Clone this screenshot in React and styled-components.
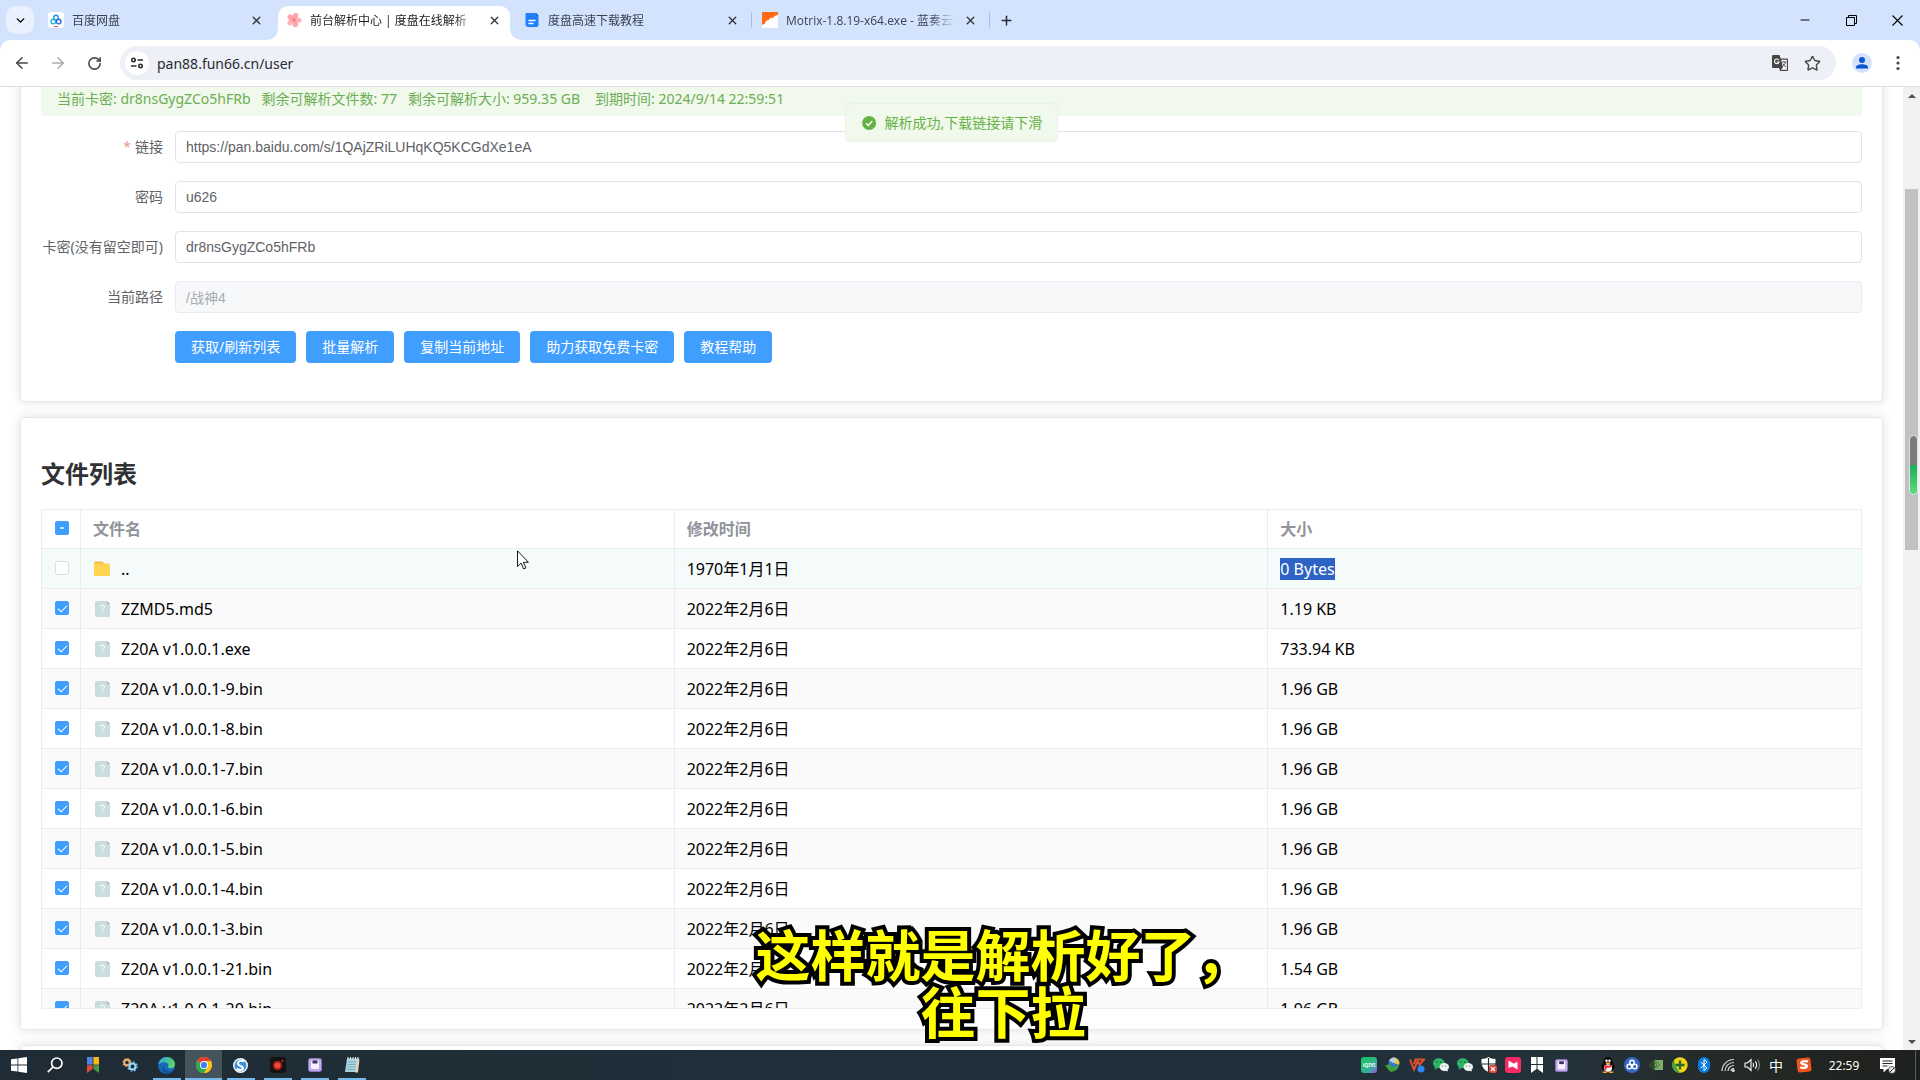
import React from 'react';
import styled, { createGlobalStyle, css } from 'styled-components';
import {
  ArrowLeft,
  ArrowRight,
  ChevronDown,
  Minus,
  Plus,
  RotateCw,
  Star,
  X,
} from 'lucide-react';

const GlobalStyle = createGlobalStyle`
  * {
    box-sizing: border-box;
  }
  body {
    margin: 0;
    overflow: hidden;
    font-family: 'Noto Sans', 'Noto Sans CJK SC', sans-serif;
    color: #000;
  }
  button {
    padding: 0;
    border: 0;
    background: none;
    color: inherit;
    font: inherit;
    cursor: pointer;
  }
`;

const Screen = styled.div`
  position: relative;
  display: flex;
  flex-direction: column;
  height: 100vh;
  background: #d3e3fd;
`;

// browser chrome
const TabStrip = styled.div`
  display: flex;
  align-items: stretch;
  height: 40px;
  padding: 6px 0 0 6px;
  background: #d3e3fd;
`;

const TabSearch = styled.button`
  display: flex;
  align-items: center;
  justify-content: center;
  width: 28px;
  height: 28px;
  margin-right: 6px;
  border-radius: 10px;
  background: #e9f1fe;
`;

const activeTab = css`
  width: 232px;
  margin-right: 6px;
  padding-right: 8px;
  border-radius: 10px 10px 0 0;
  background: #fff;
  color: #1f1f1f;
  &::before,
  &::after {
    content: '';
    position: absolute;
    bottom: 0;
    width: 10px;
    height: 10px;
  }
  &::before {
    left: -10px;
    background: radial-gradient(circle at 0 0, #d3e3fd 9px, #fff 10px);
  }
  &::after {
    right: -10px;
    background: radial-gradient(circle at 100% 0, #d3e3fd 9px, #fff 10px);
  }
`;

const separatedTab = css`
  &::after {
    content: '';
    position: absolute;
    right: 2px;
    top: 6px;
    width: 1px;
    height: 16px;
    background: #9dbff8;
  }
`;

const Tab = styled.div`
  position: relative;
  display: flex;
  align-items: center;
  gap: 8px;
  width: 238px;
  padding: 0 14px 6px 8px;
  font-family: 'Open Sans', 'Noto Sans CJK SC', sans-serif;
  font-size: 12px;
  color: #3c4350;
  ${(p) => p.$separated && separatedTab}
  ${(p) => p.$active && activeTab}
`;

const TabTitle = styled.span`
  flex: 1;
  min-width: 0;
  overflow: hidden;
  white-space: nowrap;
  mask-image: linear-gradient(to left, transparent, #000 24px);
`;

const TabButton = styled.button`
  display: flex;
  align-items: center;
  justify-content: center;
  width: ${(p) => p.$width}px;
  height: ${(p) => p.$width}px;
  color: #2b2f36;
`;

const WindowControls = styled.div`
  display: flex;
  margin: -6px 0 0 auto;
`;

const WindowButton = styled.button`
  display: flex;
  align-items: center;
  justify-content: center;
  width: 46px;
  height: 40px;
`;

const Toolbar = styled.div`
  display: flex;
  align-items: center;
  height: 47px;
  padding: 0 4px;
  border-bottom: 1px solid #dcdee2;
  border-radius: 10px 10px 0 0;
  background: #fff;
`;

const ToolButton = styled.button`
  display: flex;
  align-items: center;
  justify-content: center;
  width: ${(p) => (p.$small ? 32 : 36)}px;
  height: 32px;
  color: ${(p) => (p.$faded ? '#a9abae' : '#474747')};
`;

const Omnibox = styled.div`
  flex: 1;
  display: flex;
  align-items: center;
  height: 34px;
  margin: 0 8px;
  padding: 0 8px 0 5px;
  border-radius: 17px;
  background: #edf0f7;
`;

const SiteInfo = styled.button`
  display: flex;
  align-items: center;
  justify-content: center;
  width: 24px;
  height: 24px;
  border-radius: 50%;
  background: #fff;
`;

const Address = styled.input`
  flex: 1;
  margin: 0 8px;
  padding: 0;
  border: 0;
  outline: 0;
  background: none;
  font: 14px 'Noto Sans', 'Noto Sans CJK SC', sans-serif;
  color: #2a2c30;
`;

// page
const Viewport = styled.div`
  flex: 1;
  min-height: 0;
  display: flex;
  background: #fff;
`;

const PageArea = styled.div`
  position: relative;
  flex: 1;
  overflow: hidden;
`;

const Content = styled.main`
  display: flex;
  flex-direction: column;
  gap: 15px;
  margin-top: -28px;
  padding: 0 20px;
`;

const Card = styled.section`
  padding: 20px;
  border: 1px solid #e4e7ed;
  border-radius: 4px;
  background: #fff;
  box-shadow: 0 0 12px rgba(0, 0, 0, 0.12);
`;

const Alert = styled.div`
  display: flex;
  align-items: center;
  height: 36px;
  margin-bottom: 15px;
  padding: 0 16px;
  border-radius: 4px;
  background: #f0f9eb;
  font-size: 14px;
  color: #6dad55;
`;

const AlertItem = styled.span`
  margin-right: ${(p) => (p.$wide ? 15 : 11)}px;
`;

const FormRow = styled.div`
  display: flex;
  align-items: center;
  height: 32px;
  margin-bottom: 18px;
`;

const Label = styled.label`
  width: 134px;
  padding-right: 12px;
  font-size: 14px;
  line-height: 20px;
  text-align: right;
  white-space: nowrap;
  color: #606266;
`;

const Required = styled.span`
  margin-right: 4px;
  color: #e79a9a;
`;

const TextInput = styled.input`
  flex: 1;
  height: 32px;
  padding: 0 10px;
  border: 1px solid #e1e3e8;
  border-radius: 4px;
  outline: 0;
  background: #fff;
  font: 14px 'Liberation Sans', 'Noto Sans CJK SC', sans-serif;
  color: #606266;
  &:disabled {
    border-color: #e8ebef;
    background: #f6f8f9;
    color: #a8abb2;
  }
`;

const Actions = styled.div`
  display: flex;
  gap: 10px;
  margin-left: 134px;
`;

const PrimaryButton = styled.button`
  height: 32px;
  padding: 0 16px 2px;
  border-radius: 4px;
  background: #409eff;
  font-size: 14px;
  color: #fff;
`;

const CardTitle = styled.h1`
  margin: 20px 0 19px;
  font-size: 24px;
  line-height: 32px;
  font-weight: 700;
  color: #303133;
`;

const TableBox = styled.div`
  max-height: 500px;
  overflow: hidden;
  border-bottom: 1px solid #ebeef5;
`;

const FileTable = styled.table`
  width: 100%;
  table-layout: fixed;
  border-spacing: 0;
  font-size: 16px;
  line-height: 24px;
`;

const cell = css`
  height: 40px;
  padding: 0 12px;
  border-right: 1px solid #ebeef0;
  border-bottom: 1px solid #ebeef0;
  text-align: left;
  &:first-child {
    width: 40px;
    padding: 0 12px 2px 13px;
    border-left: 1px solid #ebeef0;
  }
`;

const HeadCell = styled.th`
  ${cell}
  border-top: 1px solid #ebeef0;
  font-weight: 700;
  color: #909399;
`;

const BodyCell = styled.td`
  ${cell}
`;

const FileRow = styled.tr`
  background: ${(p) => (p.$hovered ? '#f5fafb' : p.$striped ? '#fafafa' : '#fff')};
`;

const FileName = styled.div`
  display: flex;
  align-items: center;
  gap: 10px;
`;

const Selected = styled.span`
  background: #2c63c4;
  color: #fff;
`;

const Checkbox = styled.input`
  position: relative;
  display: block;
  appearance: none;
  width: 14px;
  height: 14px;
  margin: 0;
  border: 1px solid #dcdfe6;
  border-radius: 2px;
  background: #fff;
  &:checked {
    border-color: #409eff;
    background: #409eff;
  }
  &:checked::after {
    content: '';
    position: absolute;
    left: 4px;
    top: 1px;
    width: 4px;
    height: 8px;
    border: solid #fff;
    border-width: 0 1px 1px 0;
    transform: rotate(45deg);
  }
  &[data-partial='true']::after {
    left: 4px;
    top: 5px;
    height: 2px;
    border: 0;
    background: #c6e2ff;
    transform: none;
  }
`;

const Toast = styled.div`
  position: absolute;
  top: 16px;
  left: 50%;
  display: flex;
  align-items: center;
  gap: 8px;
  height: 39px;
  padding: 0 15px;
  border: 1px solid #e9f5e3;
  border-radius: 4px;
  background: #f0f9eb;
  font-size: 14px;
  line-height: 20px;
  white-space: nowrap;
  color: #67b245;
  transform: translateX(-50%);
`;

const Scrollbar = styled.div`
  display: flex;
  flex-direction: column;
  align-items: center;
  width: 17px;
  background: #f1f1f1;
`;

const ScrollArrow = styled.div`
  display: flex;
  align-items: center;
  justify-content: center;
  height: 17px;
`;

const ScrollSpace = styled.div`
  flex: ${(p) => p.$grow};
`;

const ScrollThumb = styled.div`
  flex: 361;
  width: 13px;
  background: #c1c1c1;
`;

// things floating over the page
const Meter = styled.div`
  position: absolute;
  top: 435px;
  right: 2px;
  width: 9px;
  height: 60px;
  border: 1px solid #e4e4e4;
  border-radius: 5px;
  background: linear-gradient(#7c7c7c 0 50%, #1fae5d 50%, #5bdc7c 100%);
`;

const Pointer = styled.svg`
  position: absolute;
  top: 550px;
  left: 517px;
`;

const Caption = styled.div`
  position: absolute;
  right: 0;
  bottom: 42px;
  left: 86px;
  font-family: 'Noto Sans CJK SC', sans-serif;
  font-size: 55px;
  font-weight: 700;
  line-height: 57px;
  text-align: center;
  color: #ff0;
  -webkit-text-stroke: 8px #000;
  paint-order: stroke fill;
  pointer-events: none;
`;

const Taskbar = styled.footer`
  display: flex;
  align-items: stretch;
  height: 30px;
  padding-right: 4px;
  background: linear-gradient(to right, #1f2c36, #20303a 70%, #233139 82%, #262a27 90%, #1d201d);
`;

const TaskItem = styled.button`
  display: flex;
  align-items: center;
  justify-content: center;
  width: 37px;
  background: ${(p) => (p.$active ? '#45535c' : 'none')};
  box-shadow: ${(p) => (p.$active ? 'inset 0 -2px #76b9ed' : 'none')};
  ${(p) =>
    p.$open &&
    css`
      background: linear-gradient(#76b9ed, #76b9ed) center bottom / 28px 2px no-repeat;
    `}
`;

const Tray = styled.div`
  display: flex;
  align-items: center;
  margin-left: auto;
  color: #fff;
`;

const TrayItem = styled.button`
  display: flex;
  align-items: center;
  justify-content: center;
  width: ${(p) => p.$width || 24}px;
  height: 30px;
  font-size: ${(p) => p.$size || 14}px;
  margin-right: ${(p) => p.$after || 0}px;
`;

const TrayEdge = styled.div`
  align-self: stretch;
  width: 1px;
  background: #5b605e;
`;

const CloudRings = ({ size = 16, bg = '#fff', mono }) => (
  <svg width={size} height={size} viewBox="0 0 16 16" fill="none">
    <rect width="16" height="16" rx={mono ? 8 : 3} fill={bg} />
    <g strokeWidth="1.4">
      <circle cx="8" cy="5.6" r="2.3" stroke={mono || '#2d8cf0'} />
      <circle cx="5.3" cy="9.6" r="2.3" stroke={mono || '#22b5d8'} />
      <circle cx="10.7" cy="9.6" r="2.3" stroke={mono || '#2d6fe0'} />
    </g>
    {!mono && <path d="M6 14.6h4" stroke="#e0424f" strokeWidth="1" />}
  </svg>
);

const Flower = () => (
  <svg width="16" height="16" viewBox="0 0 16 16">
    {[0, 72, 144, 216, 288].map((a) => (
      <ellipse
        key={a}
        cx="8"
        cy="4"
        rx="2.7"
        ry="3.5"
        fill={a % 144 ? '#ffb4ba' : '#ffa3ab'}
        transform={`rotate(${a + 20} 8 8)`}
      />
    ))}
    <circle cx="8" cy="8" r="1.7" fill="#f77a86" />
  </svg>
);

const DocIcon = () => (
  <svg width="16" height="16" viewBox="0 0 16 16">
    <path d="M2.5 1H12l2.5 2.5V13a2 2 0 0 1-2 2h-8a3 3 0 0 1-3-3V2a1 1 0 0 1 1-1z" fill="#1e80ff" />
    <path d="M12 1l2.5 2.5H12z" fill="#0d5fd0" />
    <path d="M4.5 8.5h7M4.5 11.5h5" stroke="#fff" strokeWidth="1.3" />
  </svg>
);

const LanzouIcon = () => (
  <svg width="16" height="16" viewBox="0 0 16 16">
    <rect width="16" height="16" fill="#fff" />
    <path d="M0 0h16v3c-3 .3-4 1.5-5 3-2-.6-3.6.2-4 2-2.5 0-3.5 1.3-4 3.500L0 13z" fill="#ff6a13" />
  </svg>
);

const TuneIcon = () => (
  <svg width="14" height="14" viewBox="0 0 14 14" fill="none" stroke="#2a2c30" strokeWidth="1.6">
    <circle cx="3.5" cy="4" r="1.7" />
    <path d="M7.5 4H13M1 10h5.5" />
    <circle cx="10.5" cy="10" r="1.7" />
  </svg>
);

const TranslateIcon = () => (
  <svg width="18" height="18" viewBox="0 0 18 18">
    <path d="M2 1h6.5l1.2 3.5H16a1 1 0 0 1 1 1V16a1 1 0 0 1-1 1H9.200L8 14H2a1 1 0 0 1-1-1V2a1 1 0 0 1 1-1z" fill="#474747" />
    <path d="M10.200 5.700h5.600v10.100H9.900l2-2.200z" fill="#fff" />
    <path d="M7.8 6.200A2.300 2.300 0 1 0 8 8H5.800" fill="none" stroke="#fff" strokeWidth="1.1" />
    <path d="M10.800 8h4.600M13 6.800V8M14.500 8c-.4 2-1.600 3.500-3.200 4.500M11.800 9.500c.7 1.500 1.700 2.500 3 3.200" fill="none" stroke="#474747" strokeWidth=".9" />
  </svg>
);

const AvatarIcon = () => (
  <svg width="20" height="20" viewBox="0 0 20 20">
    <circle cx="10" cy="10" r="10" fill="#d3e3fd" />
    <circle cx="10" cy="7" r="3" fill="#0b57d0" />
    <path d="M4 15.500v-1c0-2.200 3-3.200 6-3.200s6 1 6 3.200v1z" fill="#0b57d0" />
  </svg>
);

const MenuIcon = () => (
  <svg width="4" height="16" viewBox="0 0 4 16" fill="#474747">
    <circle cx="2" cy="2.5" r="1.6" />
    <circle cx="2" cy="8" r="1.6" />
    <circle cx="2" cy="13.5" r="1.6" />
  </svg>
);

const FolderIcon = () => (
  <svg width="18" height="18" viewBox="0 0 18 18">
    <path d="M1 3a1.500 1.500 0 0 1 1.500-1.500h7L12 4H1z" fill="#f3bb4c" />
    <path d="M1 3.500h14.500A1.500 1.500 0 0 1 17 5v9.500a1.500 1.500 0 0 1-1.500 1.500h-13A1.500 1.500 0 0 1 1 14.500z" fill="#ffd54f" />
  </svg>
);

const UnknownFileIcon = () => (
  <svg width="18" height="18" viewBox="0 0 18 18">
    <path d="M3.500 1H14l3 3v11.500a1.500 1.500 0 0 1-1.500 1.500h-12A1.500 1.500 0 0 1 2 15.500v-13A1.500 1.500 0 0 1 3.500 1z" fill="#cbdcde" />
    <path d="M14 1l3 3h-3z" fill="#a3b8bb" />
    <path d="M7.500 7.200a2 2 0 1 1 2.800 1.800c-.5.300-.8.600-.8 1.500M9.500 12v1.300" fill="none" stroke="#f2f8f8" strokeWidth="1.2" />
  </svg>
);

const SuccessIcon = () => (
  <svg width="16" height="16" viewBox="0 0 16 16">
    <circle cx="8" cy="8" r="7" fill="#67b245" />
    <path d="M5 8.200l2.200 2.200 4-4.300" fill="none" stroke="#fff" strokeWidth="1.4" />
  </svg>
);

const Triangle = ({ down }) => (
  <svg width="8" height="4" viewBox="0 0 8 4">
    <path d={down ? 'M0 0h8L4 4z' : 'M0 4h8L4 0z'} fill="#505050" />
  </svg>
);

const FloppyIcon = ({ size = 14 }) => (
  <svg width={size} height={size} viewBox="0 0 14 14">
    <rect x=".5" y=".5" width="13" height="13" rx="2" fill="#bfa9e6" stroke="#8f77c4" />
    <rect x="3" y="2.5" width="8" height="8.5" rx="1" fill="#f6f1ff" />
    <rect x="4.5" y="2.5" width="5" height="3" fill="#3b3354" />
  </svg>
);

const StartIcon = () => (
  <svg width="16" height="16" viewBox="0 0 16 16" fill="#fff">
    <path d="M0 2.300l6.500-.9v6.200H0zM7.300 1.300L16 0v7.600H7.300zM0 8.400h6.500v6.200L0 13.700zM7.300 8.400H16V16l-8.700-1.300z" />
  </svg>
);

const SearchIcon = () => (
  <svg width="18" height="16" viewBox="0 0 18 16" fill="none" stroke="#fff" strokeWidth="1.7">
    <circle cx="9.8" cy="6.2" r="5.2" />
    <path d="M6 10L.8 15.200" />
  </svg>
);

const RibbonIcon = () => (
  <svg width="12" height="16" viewBox="0 0 12 16">
    <path d="M0 0h5.600v7.600H0z" fill="#4a86e8" />
    <path d="M6.400 0H12v7.600H6.400z" fill="#f9b912" />
    <path d="M0 8.200h5.600V12L0 16z" fill="#e1473a" />
    <path d="M6.400 8.200H12V16l-5.600-4z" fill="#4b9b46" />
  </svg>
);

const GearsIcon = () => (
  <svg width="16" height="14" viewBox="0 0 16 14" fill="none">
    <circle cx="5" cy="4.5" r="2.8" stroke="#f0b070" strokeWidth="2" />
    <circle cx="5" cy="4.5" r="4" stroke="#e09a55" strokeWidth="1.2" strokeDasharray="1.6 1.5" />
    <circle cx="10.5" cy="8.5" r="3" stroke="#9ad4f5" strokeWidth="2.2" />
    <circle cx="10.5" cy="8.5" r="4.6" stroke="#7fbfe6" strokeWidth="1.4" strokeDasharray="1.8 1.8" />
  </svg>
);

const EdgeIcon = () => (
  <svg width="17" height="17" viewBox="0 0 17 17">
    <defs>
      <linearGradient id="edge-top" x1="0" x2="1" y1="0" y2=".4">
        <stop offset="0" stopColor="#2aa5e0" />
        <stop offset="1" stopColor="#5fd16b" />
      </linearGradient>
    </defs>
    <circle cx="8.5" cy="8.5" r="8.5" fill="#1468b8" />
    <path d="M.2 7.500C1 3 4.500 0 8.700 0 13.500 0 17 3.300 17 7.300c0 2.500-1.800 4-4.300 4-2.200 0-3.200-.9-2.500-1.900.9-1.600-.5-4.200-3.700-4.200C3.800 5.200 1.200 6.300.2 7.500z" fill="url(#edge-top)" />
    <path d="M6.200 8.500c-.8 4 3 6.500 8.600 5.600-2 2.800-5.500 3.200-8 1.900-3-1.500-3.400-5.500-.6-7.500z" fill="#1b4f9c" />
  </svg>
);

const ChromeIcon = () => (
  <svg width="16" height="16" viewBox="0 0 16 16">
    <circle cx="8" cy="8" r="8" fill="#fbc116" />
    <path d="M8 8L1.070 4A8 8 0 0 1 14.930 4z" fill="#e33b2e" />
    <path d="M8 8L1.070 4A8 8 0 0 0 8 16l4-6z" fill="#2da94f" />
    <path d="M8 4h6.930A8 8 0 0 1 8 16l3.500-6z" fill="#fbc116" />
    <circle cx="8" cy="8" r="4" fill="#fff" />
    <circle cx="8" cy="8" r="3.1" fill="#3b7ded" />
  </svg>
);

const SwirlIcon = () => (
  <svg width="15" height="15" viewBox="0 0 15 15">
    <circle cx="7.5" cy="7.5" r="7.5" fill="#f3f8fd" />
    <circle cx="7.5" cy="7.5" r="6" fill="#3b8fdc" />
    <path d="M11.500 3.500C8 1.500 4.500 3.500 5 6c.5 2 4.500 2 5 4 .2 1.600-2.500 2.800-6.500 1" fill="none" stroke="#fff" strokeWidth="2" />
  </svg>
);

const RecordIcon = () => (
  <svg width="16" height="16" viewBox="0 0 16 16">
    <rect width="16" height="16" rx="3" fill="#17120f" />
    <circle cx="7.5" cy="8.5" r="4.5" fill="#b82118" />
    <circle cx="7.5" cy="8.5" r="2.8" fill="#f04a3c" />
    <circle cx="12.5" cy="4" r="1" fill="#d9362b" />
  </svg>
);

const NotepadIcon = () => (
  <svg width="16" height="16" viewBox="0 0 16 16">
    <path d="M3 1.500h12L13.500 15H1z" fill="#a9d3df" />
    <path d="M13 2.500h2.500L14 15.500h-3z" fill="#dcd7b5" />
    <path d="M4 5h8M3.700 7.500h8M3.400 10h8M3 12.500h8" stroke="#6fa9bb" strokeWidth=".8" />
    <path d="M4 0v2.500M6.500 0v2.500M9 0v2.500M11.500 0v2.500M14 0v2.500" stroke="#eef6f8" />
  </svg>
);

const QiyiIcon = () => (
  <svg width="16" height="16" viewBox="0 0 16 16">
    <defs>
      <linearGradient id="qiyi" x1="0" x2="1" y1="0" y2="1">
        <stop offset=".3" stopColor="#1fc06a" />
        <stop offset=".7" stopColor="#3fa9a8" />
        <stop offset="1" stopColor="#b04be0" />
      </linearGradient>
    </defs>
    <rect width="16" height="16" rx="3" fill="url(#qiyi)" />
    <text x="8" y="10" fontSize="5" fontWeight="700" fill="#fff" textAnchor="middle">iQIYI</text>
  </svg>
);

const GlobeArrowIcon = () => (
  <svg width="16" height="16" viewBox="0 0 16 16">
    <circle cx="9" cy="6" r="5.5" fill="#3979c9" />
    <path d="M9 .5a5.500 5.500 0 0 1 5 7.500L9 6z" fill="#e8c93e" />
    <path d="M4 4c2 0 3 2 5 2s2-3 1-5.500A5.500 5.500 0 0 0 4 4z" fill="#b9cfe2" />
    <path d="M0 8.500L5 7l1 3c3 .5 6-.5 8-3 .5 5-5 8.500-9 7.500z" fill="#3ea33a" />
  </svg>
);

const VyIcon = () => (
  <svg width="16" height="16" viewBox="0 0 16 16">
    <path d="M1 2.500l4 10 3.500-8 2 3 4.500-5H6.500L5 7" fill="none" stroke="#e5502c" strokeWidth="2" />
    <circle cx="12" cy="12" r="3.5" fill="#2f86f0" />
  </svg>
);

const WeChatIcon = () => (
  <svg width="16" height="14" viewBox="0 0 16 14">
    <ellipse cx="5.8" cy="5.3" rx="5.8" ry="5" fill="#2fb566" />
    <path d="M2 8.500l-.5 3L5 10z" fill="#2fb566" />
    <ellipse cx="11.3" cy="9" rx="4.7" ry="4" fill="#f0f2f1" />
    <path d="M14 11l1 2.500-3-1z" fill="#f0f2f1" />
    <g fill="#1a5e36">
      <circle cx="4" cy="4" r=".8" />
      <circle cx="7.8" cy="4" r=".8" />
      <circle cx="9.8" cy="8" r=".6" />
      <circle cx="12.8" cy="8" r=".6" />
    </g>
  </svg>
);

const ShieldIcon = () => (
  <svg width="16" height="16" viewBox="0 0 16 16">
    <path d="M7.500 0C9 1.300 11.500 2 14.500 2c.3 6-1 10.500-7 13C1.500 12.500.2 8 .5 2c3 0 5.500-.7 7-2z" fill="#fff" />
    <path d="M7.500 1v14M.8 7h13.500" stroke="#1f2c33" strokeWidth="1.2" />
    <rect x="8" y="8" width="8" height="8" rx="2" fill="#dc4336" />
    <path d="M10 10l4 4M14 10l-4 4" stroke="#fff" strokeWidth="1.2" />
  </svg>
);

const PinkIcon = () => (
  <svg width="16" height="16" viewBox="0 0 16 16">
    <rect width="16" height="16" rx="3" fill="#f62b66" />
    <path d="M3.500 3.500l5 3L12.500 5v7.500l-5-3-4 1.500z" fill="#fff" />
  </svg>
);

const WhiteRibbonIcon = () => (
  <svg width="12" height="16" viewBox="0 0 12 16" fill="#fff">
    <path d="M0 0h5.500v7H0zM6.500 0H12v7H6.500zM0 8h5.500v4L0 16zM6.500 8H12v8l-5.500-4z" />
  </svg>
);

const PenguinIcon = () => (
  <svg width="16" height="16" viewBox="0 0 16 16">
    <ellipse cx="8" cy="9.5" rx="6.5" ry="5" fill="#050505" />
    <ellipse cx="8" cy="5" rx="4.5" ry="5" fill="#050505" />
    <ellipse cx="8" cy="11" rx="4" ry="3.8" fill="#fff" />
    <circle cx="6.5" cy="3.8" r="1.2" fill="#fff" />
    <circle cx="9.5" cy="3.8" r="1.2" fill="#fff" />
    <ellipse cx="8" cy="6.2" rx="2.5" ry=".9" fill="#f6a51c" />
    <path d="M3.500 7.500c3 1.500 6 1.500 9 0v2c-3 1.300-5 1.300-6 1.200v2.500H4.500V10z" fill="#e22e2a" />
    <path d="M2.500 14.500h4.500v1.500h-4zM9 14.500h4.500l-.5 1.500H9z" fill="#f6a51c" />
  </svg>
);

const NvidiaIcon = () => (
  <svg width="14" height="10" viewBox="0 0 14 10">
    <rect x="5.5" width="8.5" height="10" fill="#7fae6a" />
    <path d="M.5 5C2 2.700 4 1.800 6 1.800S9.500 3 10.500 4.500C9.500 6.500 8 7.500 6 7.500 4.700 7.500 3.500 6.500 3 5.200 4 3.800 5 3.500 6 3.500s2 .7 2 1.300-1 1.200-2 1.200M.5 5C1.500 7.500 3.500 9.200 6 9.200" fill="none" stroke="#3c6b2c" strokeWidth="1" />
  </svg>
);

const PlusBallIcon = () => (
  <svg width="16" height="16" viewBox="0 0 16 16">
    <circle cx="8" cy="8" r="7.7" fill="#f5d415" />
    <path d="M2.500 2.500A7.700 7.700 0 0 0 8 15.700C6 13 2 8 2.500 2.500z" fill="#3fa545" />
    <path d="M8 3.500v9M3.500 8h9" stroke="#28692c" strokeWidth="2.4" />
  </svg>
);

const BluetoothIcon = () => (
  <svg width="12" height="16" viewBox="0 0 12 16">
    <rect width="12" height="16" rx="6" fill="#0a7be0" />
    <path d="M3 5l6 6-3 2.700V2.300L9 5l-6 6" fill="none" stroke="#fff" strokeWidth="1" />
  </svg>
);

const WifiIcon = () => (
  <svg width="14" height="14" viewBox="0 0 14 14" fill="none" stroke="#d8dad9" strokeWidth="1.2">
    <path d="M1 13C1 6.500 6.500 1.500 13 1.500M4 13c0-5 4-8.500 9-8.500M7 13c0-3.200 2.700-5.500 6-5.500M10 13c0-1.400 1.300-2.500 3-2.500" />
    <circle cx="12.3" cy="12.5" r=".9" fill="#fff" />
  </svg>
);

const VolumeIcon = () => (
  <svg width="17" height="14" viewBox="0 0 17 14" fill="none" stroke="#fff" strokeWidth="1.1">
    <path d="M1 5h2.500L7 1.500v11L3.500 9H1zM9 5c.8 1.200.8 2.800 0 4M11.300 3.300c1.600 2.200 1.600 5.200 0 7.400" />
    <path d="M13.600 1.500c2.400 3.400 2.400 7.600 0 11" stroke="#878a88" />
  </svg>
);

const SogouIcon = () => (
  <svg width="16" height="16" viewBox="0 0 16 16">
    <rect x="1" y="1" width="14" height="14" rx="2.5" fill="#ee5620" transform="rotate(-6 8 8)" />
    <path d="M12 4.500c-3-.7-6.500-.3-6.800 1.200-.3 2 6 1.400 5.800 3.500-.2 1.800-4 2-7 1.300" fill="none" stroke="#fff" strokeWidth="2.2" />
  </svg>
);

const NoticeIcon = () => (
  <svg width="17" height="17" viewBox="0 0 17 17">
    <path d="M1 1h15v11H8l-3.500 3.500V12H1z" fill="#fff" />
    <path d="M3.500 4h10M3.500 6.500h10M3.500 9h5" stroke="#222624" strokeWidth="1" />
    <circle cx="13" cy="13" r="3.5" fill="#e8e9e8" stroke="#222624" strokeWidth=".7" />
    <path d="M11 15l4-4" stroke="#222624" strokeWidth="1" />
  </svg>
);

const tabs = [
  { title: '百度网盘', icon: <CloudRings /> },
  { title: '前台解析中心 | 度盘在线解析', icon: <Flower />, active: true },
  { title: '度盘高速下载教程', icon: <DocIcon />, separated: true },
  { title: 'Motrix-1.8.19-x64.exe - 蓝奏云', icon: <LanzouIcon />, separated: true },
];

const fields = [
  { id: 'link', label: '链接', value: 'https://pan.baidu.com/s/1QAjZRiLUHqKQ5KCGdXe1eA', required: true },
  { id: 'pwd', label: '密码', value: 'u626' },
  { id: 'card', label: '卡密(没有留空即可)', value: 'dr8nsGygZCo5hFRb' },
  { id: 'path', label: '当前路径', value: '/战神4', disabled: true },
];

const actions = ['获取/刷新列表', '批量解析', '复制当前地址', '助力获取免费卡密', '教程帮助'];

const files = [
  { name: '..', date: '1970年1月1日', size: '0 Bytes', folder: true },
  { name: 'ZZMD5.md5', size: '1.19 KB' },
  { name: 'Z20A v1.0.0.1.exe', size: '733.94 KB' },
  { name: 'Z20A v1.0.0.1-9.bin', size: '1.96 GB' },
  { name: 'Z20A v1.0.0.1-8.bin', size: '1.96 GB' },
  { name: 'Z20A v1.0.0.1-7.bin', size: '1.96 GB' },
  { name: 'Z20A v1.0.0.1-6.bin', size: '1.96 GB' },
  { name: 'Z20A v1.0.0.1-5.bin', size: '1.96 GB' },
  { name: 'Z20A v1.0.0.1-4.bin', size: '1.96 GB' },
  { name: 'Z20A v1.0.0.1-3.bin', size: '1.96 GB' },
  { name: 'Z20A v1.0.0.1-21.bin', size: '1.54 GB' },
  { name: 'Z20A v1.0.0.1-20.bin', size: '1.96 GB' },
];

const taskItems = [
  { name: 'Start', icon: <StartIcon /> },
  { name: 'Search', icon: <SearchIcon /> },
  { name: 'Bookmarks', icon: <RibbonIcon /> },
  { name: 'Services', icon: <GearsIcon /> },
  { name: 'Edge', icon: <EdgeIcon />, open: true },
  { name: 'Chrome', icon: <ChromeIcon />, active: true },
  { name: 'Swirl', icon: <SwirlIcon />, open: true },
  { name: 'Recorder', icon: <RecordIcon />, open: true },
  { name: 'Disk', icon: <FloppyIcon />, open: true },
  { name: 'Notepad', icon: <NotepadIcon />, open: true },
];

const trayItems = [
  { name: 'iQIYI', icon: <QiyiIcon /> },
  { name: 'Downloads', icon: <GlobeArrowIcon /> },
  { name: 'VY', icon: <VyIcon /> },
  { name: 'WeChat', icon: <WeChatIcon /> },
  { name: 'WeChat 2', icon: <WeChatIcon /> },
  { name: 'Security', icon: <ShieldIcon /> },
  { name: 'Player', icon: <PinkIcon /> },
  { name: 'Ribbon', icon: <WhiteRibbonIcon /> },
  { name: 'Disk', icon: <FloppyIcon size={13} />, after: 23 },
  { name: 'QQ', icon: <PenguinIcon /> },
  { name: 'Netdisk', icon: <CloudRings bg="#3667c4" mono="#fff" /> },
  { name: 'Nvidia', icon: <NvidiaIcon /> },
  { name: 'Guard', icon: <PlusBallIcon /> },
  { name: 'Bluetooth', icon: <BluetoothIcon /> },
  { name: 'Network', icon: <WifiIcon /> },
  { name: 'Volume', icon: <VolumeIcon /> },
];

class BrowserChrome extends React.Component {
  render() {
    return (
      <>
        <TabStrip>
          <TabSearch aria-label="Search tabs">
            <ChevronDown size={13} strokeWidth={2.5} />
          </TabSearch>
          {tabs.map((tab) => (
            <Tab key={tab.title} $active={tab.active} $separated={tab.separated}>
              {tab.icon}
              <TabTitle>{tab.title}</TabTitle>
              <TabButton $width={16} aria-label="Close tab">
                <X size={13} strokeWidth={2.4} />
              </TabButton>
            </Tab>
          ))}
          <TabButton $width={28} aria-label="New tab">
            <Plus size={15} strokeWidth={2.4} />
          </TabButton>
          <WindowControls>
            <WindowButton aria-label="Minimize">
              <Minus size={14} strokeWidth={1.7} />
            </WindowButton>
            <WindowButton aria-label="Restore">
              <svg width="11" height="11" viewBox="0 0 11 11" fill="none" stroke="#000">
                <path d="M.5 2.500h8v8h-8zM2.500 2.500v-2h8v8h-2" />
              </svg>
            </WindowButton>
            <WindowButton aria-label="Close">
              <svg width="11" height="11" viewBox="0 0 11 11" stroke="#000" strokeWidth="1.1">
                <path d="M.5.5l10 10M10.500.5l-10 10" />
              </svg>
            </WindowButton>
          </WindowControls>
        </TabStrip>
        <Toolbar>
          <ToolButton aria-label="Back">
            <ArrowLeft size={18} />
          </ToolButton>
          <ToolButton aria-label="Forward" $faded>
            <ArrowRight size={18} />
          </ToolButton>
          <ToolButton aria-label="Reload">
            <RotateCw size={15} strokeWidth={2.5} />
          </ToolButton>
          <Omnibox>
            <SiteInfo aria-label="Site information">
              <TuneIcon />
            </SiteInfo>
            <Address aria-label="Address" defaultValue="pan88.fun66.cn/user" />
            <ToolButton aria-label="Translate" $small>
              <TranslateIcon />
            </ToolButton>
            <ToolButton aria-label="Bookmark" $small>
              <Star size={17} />
            </ToolButton>
          </Omnibox>
          <ToolButton aria-label="Profile">
            <AvatarIcon />
          </ToolButton>
          <ToolButton aria-label="Menu">
            <MenuIcon />
          </ToolButton>
        </Toolbar>
      </>
    );
  }
}

class ParseForm extends React.Component {
  render() {
    return (
      <Card>
        <Alert>
          <AlertItem>当前卡密: dr8nsGygZCo5hFRb</AlertItem>
          <AlertItem>剩余可解析文件数: 77</AlertItem>
          <AlertItem $wide>剩余可解析大小: 959.35 GB</AlertItem>
          <AlertItem>到期时间: 2024/9/14 22:59:51</AlertItem>
        </Alert>
        {fields.map((field) => (
          <FormRow key={field.id}>
            <Label htmlFor={field.id}>
              {field.required && <Required>*</Required>}
              {field.label}
            </Label>
            <TextInput
              id={field.id}
              type="text"
              defaultValue={field.value}
              disabled={field.disabled}
            />
          </FormRow>
        ))}
        <FormRow>
          <Actions>
            {actions.map((text) => (
              <PrimaryButton key={text}>{text}</PrimaryButton>
            ))}
          </Actions>
        </FormRow>
      </Card>
    );
  }
}

class FileList extends React.Component {
  render() {
    return (
      <Card>
        <CardTitle>文件列表</CardTitle>
        <TableBox>
          <FileTable>
            <thead>
              <tr>
                <HeadCell>
                  <Checkbox type="checkbox" aria-label="全选" data-partial="true" defaultChecked />
                </HeadCell>
                <HeadCell>文件名</HeadCell>
                <HeadCell>修改时间</HeadCell>
                <HeadCell>大小</HeadCell>
              </tr>
            </thead>
            <tbody>
              {files.map((file, i) => (
                <FileRow key={file.name} $hovered={i === 0} $striped={i % 2 === 1}>
                  <BodyCell>
                    <Checkbox type="checkbox" aria-label={file.name} defaultChecked={!file.folder} />
                  </BodyCell>
                  <BodyCell>
                    <FileName>
                      {file.folder ? <FolderIcon /> : <UnknownFileIcon />}
                      {file.name}
                    </FileName>
                  </BodyCell>
                  <BodyCell>{file.date || '2022年2月6日'}</BodyCell>
                  <BodyCell>{file.folder ? <Selected>{file.size}</Selected> : file.size}</BodyCell>
                </FileRow>
              ))}
            </tbody>
          </FileTable>
        </TableBox>
      </Card>
    );
  }
}

const App = () => (
  <Screen>
    <GlobalStyle />
    <BrowserChrome />
    <Viewport>
      <PageArea>
        <Content>
          <ParseForm />
          <FileList />
          <Card />
        </Content>
        <Toast role="status">
          <SuccessIcon />
          解析成功,下载链接请下滑
        </Toast>
      </PageArea>
      <Scrollbar>
        <ScrollArrow>
          <Triangle />
        </ScrollArrow>
        <ScrollSpace $grow={85} />
        <ScrollThumb />
        <ScrollSpace $grow={483} />
        <ScrollArrow>
          <Triangle down />
        </ScrollArrow>
      </Scrollbar>
    </Viewport>
    <Taskbar>
      {taskItems.map((item) => (
        <TaskItem key={item.name} aria-label={item.name} $active={item.active} $open={item.open}>
          {item.icon}
        </TaskItem>
      ))}
      <Tray>
        {trayItems.map((item) => (
          <TrayItem key={item.name} aria-label={item.name} $after={item.after}>
            {item.icon}
          </TrayItem>
        ))}
        <TrayItem>中</TrayItem>
        <TrayItem $width={32} aria-label="Input method">
          <SogouIcon />
        </TrayItem>
        <TrayItem $width={48} $size={12}>
          22:59
        </TrayItem>
        <TrayItem $width={38} $after={9} aria-label="Notifications">
          <NoticeIcon />
        </TrayItem>
        <TrayEdge />
      </Tray>
    </Taskbar>
    <Meter />
    <Pointer width="12" height="20" viewBox="0 0 12 20">
      <path
        d="M.5.8v15.700l3.600-3.400 2.500 5.800 2.300-1-2.500-5.600h5z"
        fill="#fff"
        stroke="#000"
        strokeWidth=".9"
      />
    </Pointer>
    <Caption>
      这样就是解析好了，
      <br />
      往下拉
    </Caption>
  </Screen>
);

export default App;
